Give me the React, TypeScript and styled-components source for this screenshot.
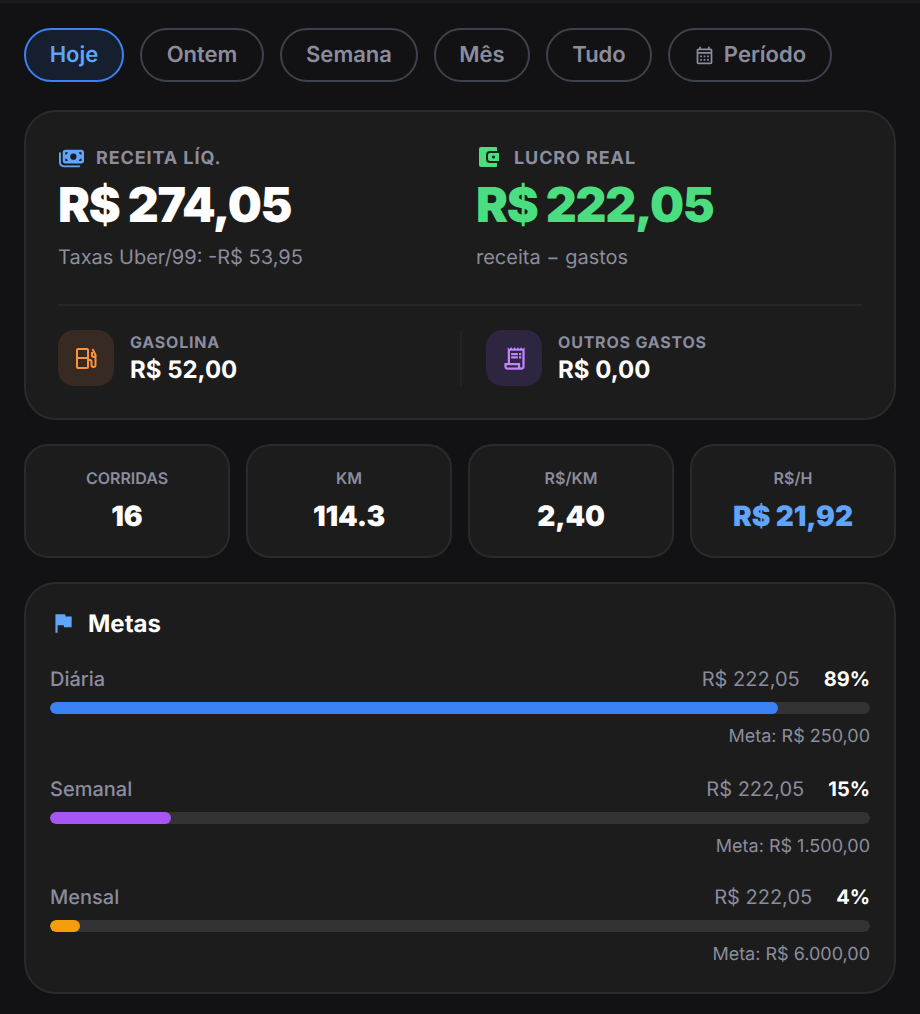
import React from "react";
import styled, { createGlobalStyle } from "styled-components";
import { FaMoneyBills } from "react-icons/fa6";
import { MdFlag, MdOutlineCalendarMonth, MdOutlineReceiptLong } from "react-icons/md";

const GlobalStyle = createGlobalStyle`
  html, body {
    margin: 0;
    padding: 0;
    background: #121214;
  }
  * {
    box-sizing: border-box;
  }
  body {
    font-family: Inter, "Liberation Sans", sans-serif;
    text-rendering: geometricPrecision;
  }
`;

const Page = styled.div`
  width: 920px;
  height: 1014px;
  overflow: hidden;
  padding: 25px 24px 0;
  border-top: 3px solid #1b1b1e;
  display: flex;
  flex-direction: column;
  gap: 28px;
`;

const Filters = styled.div`
  display: flex;
  gap: 16px;
`;

const Pill = styled.button<{ $active?: boolean; $width: number }>`
  width: ${(p) => p.$width}px;
  height: 54px;
  padding: 0 0 1px;
  border-radius: 27px;
  border: 2px solid ${(p) => (p.$active ? "#3b82f6" : "#3f414c")};
  background: ${(p) => (p.$active ? "#151f2e" : "transparent")};
  color: ${(p) => (p.$active ? "#60a5fa" : "#8b8d9e")};
  font-family: inherit;
  font-size: 22px;
  font-weight: 600;
  text-rendering: inherit;
  display: flex;
  align-items: center;
  justify-content: center;
  gap: 9px;

  svg {
    width: 21px;
    height: 21px;
    margin-top: 1px;
  }
`;

const Card = styled.section`
  background: #1c1c1c;
  border: 2px solid #2a2a2c;
  border-radius: 32px;
`;

const Hero = styled(Card)`
  height: 310px;
  padding: 32px 32px 0;
`;

const HeroTop = styled.div`
  display: grid;
  grid-template-columns: 418px 1fr;
  height: 162px;
  border-bottom: 2px solid #262628;
`;

const HeroLabel = styled.div`
  display: flex;
  align-items: center;
  gap: 12px;
  height: 28px;
  font-size: 18px;
  font-weight: 700;
  letter-spacing: 0.9px;
  color: #8b8d9e;
`;

const IconSlot = styled.span<{ $color: string }>`
  display: flex;
  justify-content: center;
  width: 26px;
  color: ${(p) => p.$color};
`;

const Amount = styled.div<{ $color: string }>`
  margin-top: 2px;
  font-size: 48px;
  line-height: 62px;
  font-weight: 900;
  letter-spacing: -1.3px;
  color: ${(p) => p.$color};
`;

const Note = styled.div`
  margin-top: 7px;
  font-size: 20px;
  line-height: 28px;
  color: #8b8d9e;
`;

const HeroBottom = styled.div`
  display: grid;
  grid-template-columns: 402px 1fr;
  margin-top: 24px;
`;

const Expense = styled.div<{ $divided?: boolean }>`
  display: flex;
  align-items: center;
  gap: 16px;
  height: 56px;
  ${(p) => (p.$divided ? "border-left: 2px solid #232325; padding-left: 24px;" : "")}
`;

const ExpenseIcon = styled.div<{ $bg: string; $color: string }>`
  width: 56px;
  height: 56px;
  border-radius: 16px;
  background: ${(p) => p.$bg};
  color: ${(p) => p.$color};
  display: flex;
  align-items: center;
  justify-content: center;
`;

const ExpenseLabel = styled.div`
  font-size: 16px;
  line-height: 23px;
  font-weight: 700;
  letter-spacing: 0.8px;
  color: #8b8d9e;
`;

const ExpenseValue = styled.div`
  margin-top: 1px;
  font-size: 24px;
  line-height: 30px;
  font-weight: 700;
  color: #fff;
`;

const Stats = styled.div`
  display: grid;
  grid-template-columns: repeat(4, 1fr);
  gap: 16px;
  margin-top: -4px;
`;

const Stat = styled(Card)`
  height: 114px;
  border-radius: 24px;
  display: flex;
  flex-direction: column;
  align-items: center;
  padding-top: 20px;
`;

const StatLabel = styled.div`
  font-size: 16px;
  line-height: 24px;
  font-weight: 600;
  color: #8b8d9e;
`;

const StatValue = styled.div<{ $color?: string }>`
  margin-top: 8px;
  font-size: 28px;
  line-height: 36px;
  font-weight: 900;
  letter-spacing: -0.1px;
  color: ${(p) => p.$color ?? "#fff"};
`;

const Goals = styled(Card)`
  height: 412px;
  margin-top: -4px;
  padding: 21px 24px 0;
`;

const GoalsTitle = styled.h2`
  margin: 0 0 24px;
  display: flex;
  align-items: center;
  gap: 12px;
  height: 36px;
  font-size: 24px;
  font-weight: 700;
  color: #fff;
`;

const Goal = styled.div`
  margin-bottom: 24px;

  &:first-of-type {
    margin-bottom: 26px;
  }
`;

const GoalRow = styled.div`
  display: flex;
  align-items: center;
  height: 28px;
  font-size: 20px;
  color: #8b8d9e;
`;

const GoalName = styled.span`
  flex: 1;
  font-weight: 500;
`;

const GoalPercent = styled.span`
  margin-left: 24px;
  color: #fff;
  font-weight: 700;
`;

const Track = styled.div`
  height: 12px;
  margin-top: 9px;
  border-radius: 6px;
  background: #333335;
  overflow: hidden;
`;

const Fill = styled.div<{ $color: string }>`
  height: 100%;
  border-radius: 6px;
  background: ${(p) => p.$color};
`;

const GoalTarget = styled.div`
  margin-top: 11px;
  text-align: right;
  font-size: 18px;
  line-height: 24px;
  color: #8b8d9e;
`;

function FuelIcon(): JSX.Element {
  return (
    <svg width="22" height="24" viewBox="0 0 22 24" fill="none" stroke="currentColor" strokeWidth="2">
      <rect x="2" y="3" width="11" height="19" rx="1" />
      <path d="M2 12h11" />
      <path d="M13 14h2a1.5 1.5 0 0 1 1.5 1.5V19a2 2 0 0 0 4 0V9l-3-6" />
      <path d="M17 6v3a1.7 1.7 0 0 0 3.5 0.5" />
    </svg>
  );
}

function WalletIcon(): JSX.Element {
  return (
    <svg width="22" height="22" viewBox="0 1 22 22">
      <path
        fill="currentColor"
        d="M3 1h15a1 1 0 0 1 1 1v3h-7a4 4 0 0 0-4 4v4a4 4 0 0 0 4 4h7v3a1 1 0 0 1-1 1H3a2 2 0 0 1-2-2V3a2 2 0 0 1 2-2z"
      />
      <path
        fill="currentColor"
        fillRule="evenodd"
        d="M12 7h9v8h-9a2 2 0 0 1-2-2V9a2 2 0 0 1 2-2zm2 4a1.5 1.5 0 1 0 3 0a1.5 1.5 0 1 0-3 0z"
      />
    </svg>
  );
}

const filters = [
  { label: "Hoje", width: 100 },
  { label: "Ontem", width: 124 },
  { label: "Semana", width: 138 },
  { label: "Mês", width: 96 },
  { label: "Tudo", width: 106 },
];

const stats = [
  { label: "CORRIDAS", value: "16" },
  { label: "KM", value: "114.3" },
  { label: "R$/KM", value: "2,40" },
  { label: "R$/H", value: "R$ 21,92", color: "#60a5fa" },
];

const goals = [
  { name: "Diária", target: 250, targetText: "R$ 250,00", color: "#3b82f6" },
  { name: "Semanal", target: 1500, targetText: "R$ 1.500,00", color: "#a855f7" },
  { name: "Mensal", target: 6000, targetText: "R$ 6.000,00", color: "#f59e0b" },
];

const profit = 222.05;

export default function App(): JSX.Element {
  return (
    <>
      <GlobalStyle />
      <Page>
        <Filters>
          {filters.map((f, i) => (
            <Pill key={f.label} $active={i === 0} $width={f.width}>
              {f.label}
            </Pill>
          ))}
          <Pill $width={164}>
            <MdOutlineCalendarMonth />
            Período
          </Pill>
        </Filters>

        <Hero>
          <HeroTop>
            <div>
              <HeroLabel>
                <IconSlot $color="#60a5fa">
                  <FaMoneyBills size={25} />
                </IconSlot>
                RECEITA LÍQ.
              </HeroLabel>
              <Amount $color="#fff">R$ 274,05</Amount>
              <Note>Taxas Uber/99: -R$ 53,95</Note>
            </div>
            <div>
              <HeroLabel>
                <IconSlot $color="#4ade80">
                  <WalletIcon />
                </IconSlot>
                LUCRO REAL
              </HeroLabel>
              <Amount $color="#4ade80">R$ 222,05</Amount>
              <Note>receita − gastos</Note>
            </div>
          </HeroTop>
          <HeroBottom>
            <Expense>
              <ExpenseIcon $bg="#372a22" $color="#fb923c">
                <FuelIcon />
              </ExpenseIcon>
              <div>
                <ExpenseLabel>GASOLINA</ExpenseLabel>
                <ExpenseValue>R$ 52,00</ExpenseValue>
              </div>
            </Expense>
            <Expense $divided>
              <ExpenseIcon $bg="#2e2540" $color="#c084fc">
                <MdOutlineReceiptLong size={27} />
              </ExpenseIcon>
              <div>
                <ExpenseLabel>OUTROS GASTOS</ExpenseLabel>
                <ExpenseValue>R$ 0,00</ExpenseValue>
              </div>
            </Expense>
          </HeroBottom>
        </Hero>

        <Stats>
          {stats.map((s) => (
            <Stat key={s.label}>
              <StatLabel>{s.label}</StatLabel>
              <StatValue $color={s.color}>{s.value}</StatValue>
            </Stat>
          ))}
        </Stats>

        <Goals>
          <GoalsTitle>
            <IconSlot $color="#60a5fa">
              <MdFlag size={28} />
            </IconSlot>
            Metas
          </GoalsTitle>
          {goals.map((g) => {
            const ratio = profit / g.target;
            return (
              <Goal key={g.name}>
                <GoalRow>
                  <GoalName>{g.name}</GoalName>
                  R$ 222,05
                  <GoalPercent>{Math.round(ratio * 100)}%</GoalPercent>
                </GoalRow>
                <Track>
                  <Fill $color={g.color} style={{ width: `${ratio * 100}%` }} />
                </Track>
                <GoalTarget>Meta: {g.targetText}</GoalTarget>
              </Goal>
            );
          })}
        </Goals>
      </Page>
    </>
  );
}
